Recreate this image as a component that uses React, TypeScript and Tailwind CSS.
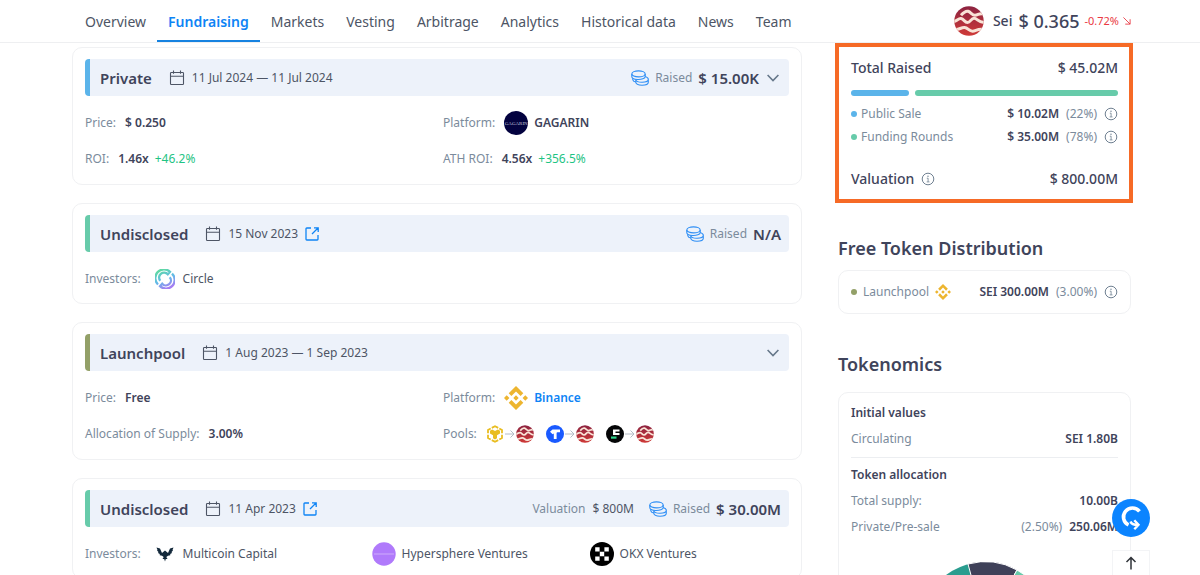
import React from "react";
import { clsx } from "clsx";

const TABS = ["Overview", "Fundraising", "Markets", "Vesting", "Arbitrage", "Analytics", "Historical data", "News", "Team"];

function SeiLogo({ className }: { className: string }) {
  return (
    <svg viewBox="0 0 30 30" className={className} aria-hidden="true">
      <defs>
        <linearGradient id="sei" x1="0" y1="0" x2="0" y2="1">
          <stop offset="0" stopColor="#8c2340" />
          <stop offset="1" stopColor="#cf3b38" />
        </linearGradient>
        <clipPath id="seiClip">
          <circle cx="15" cy="15" r="14.7" />
        </clipPath>
      </defs>
      <circle cx="15" cy="15" r="14.7" fill="url(#sei)" />
      <g clipPath="url(#seiClip)" fill="none" stroke="#f9e3d6" strokeWidth="3">
        <path d="M7 9.300C9.500 6.500 11.500 4.500 14 5.300C17 6.300 18 9.300 21 9.300C24 9.300 25.500 6.500 29 8" />
        <path d="M-1 15.500C2.500 15.500 4 12.300 7 12.600C10 13 10.500 16.500 13.500 16.500C16.500 16.500 17 12.300 20 12.300C23.500 12.300 24 16.800 31 16.500" />
        <path d="M1 23.500C5 24 7 21.300 10.500 21.500C14 21.700 15 25.300 18.500 25.200C22 25.100 23.500 22.300 30 23.500" />
      </g>
    </svg>
  );
}

function CalendarIcon() {
  return (
    <svg viewBox="0 0 16 16" className="size-4 shrink-0" fill="none" stroke="#4d5565" strokeWidth="1.100" aria-hidden="true">
      <rect x="1.500" y="2.500" width="13" height="12" rx="0.8" />
      <path d="M1.500 6.200H14.500M4.500 0.600V3.800M11.500 0.600V3.800" />
    </svg>
  );
}

function CoinsIcon() {
  return (
    <svg viewBox="0 0 18 16" className="h-4 w-[18px] shrink-0" fill="none" stroke="#2f8ff5" strokeWidth="1.1" aria-hidden="true">
      <ellipse cx="7.500" cy="3.900" rx="6.700" ry="3" />
      <path d="M0.800 4V6.500C0.800 8 3 9.300 6.500 9.500C10.500 9.700 14.200 8.500 14.200 6.500V4" />
      <path d="M1.800 8.300V9.800C2.200 11 3.500 11.700 5 12" />
      <path d="M14.200 6.500C16.200 7.200 17.300 8.100 17.300 9.300C17.300 11 14.500 12.300 11 12.300C7.500 12.300 5 11.200 4.800 9.500V12.300C5 14 7.500 15.200 11 15.200C14.500 15.200 17.300 13.900 17.300 12.200V9.300" />
    </svg>
  );
}

function ExternalIcon() {
  return (
    <svg viewBox="0 0 14 14" className="size-[14px]" fill="none" stroke="#0e84f5" strokeWidth="1.300" aria-hidden="true">
      <path d="M6 1H1.800Q1 1 1 1.800V12.200Q1 13 1.800 13H12.200Q13 13 13 12.200V8M9 0.800H13.200V5M13 1L7 7" />
    </svg>
  );
}

function Chevron() {
  return (
    <svg viewBox="0 0 12 8" className="h-2 w-3" fill="none" stroke="#66788a" strokeWidth="1.600" aria-hidden="true">
      <path d="M0.600 1L6 6.500L11.400 1" />
    </svg>
  );
}

function InfoIcon() {
  return (
    <button type="button" aria-label="More information" className="shrink-0">
      <svg viewBox="0 0 14 14" className="size-[14px]" fill="none" stroke="#6f8091" aria-hidden="true">
        <circle cx="7" cy="7" r="5.800" />
        <path d="M5.800 6.200H7.100V9.800M5.700 9.900H8.500" strokeWidth="0.800" />
        <circle cx="7" cy="4.200" r="0.700" fill="#6f8091" stroke="none" />
      </svg>
    </button>
  );
}

function BinanceLogo({ className }: { className: string }) {
  return (
    <svg viewBox="0 0 24 24" className={className} fill="#edb52f" aria-hidden="true">
      <path d="M12 0L19.300 7.300L16.600 10L12 5.400L7.400 10L4.700 7.300ZM2.700 9.300L5.400 12L2.700 14.700L0 12ZM21.300 9.300L24 12L21.300 14.700L18.600 12ZM12 9.300L14.700 12L12 14.700L9.300 12ZM7.400 14L12 18.600L16.600 14L19.300 16.700L12 24L4.700 16.700Z" />
    </svg>
  );
}

function GagarinLogo() {
  return (
    <span className="flex size-6 items-center justify-center rounded-full bg-[#03023f] font-['Liberation_Serif',serif] text-[5px] leading-none text-[#c4c4dc]">
      GAGARIN
    </span>
  );
}

function CircleLogo() {
  return (
    <svg viewBox="0 0 20 20" className="size-5" fill="none" strokeWidth="2.300" aria-hidden="true">
      <defs>
        <linearGradient id="circleA" gradientUnits="userSpaceOnUse" x1="6" y1="1" x2="14" y2="19">
          <stop offset="0" stopColor="#5fd8a4" />
          <stop offset="0.500" stopColor="#62bbe8" />
          <stop offset="1" stopColor="#a77bf3" />
        </linearGradient>
      </defs>
      <g stroke="url(#circleA)">
        <path d="M3 15.500A8.700 8.700 0 0 1 15 2.800L12.800 5.300A4.800 4.800 0 0 0 5.300 11.800" />
        <path d="M17 4.600A8.700 8.700 0 0 1 5 17.200L7.200 14.700A4.800 4.800 0 0 0 14.700 8.200" />
      </g>
    </svg>
  );
}

function MulticoinLogo() {
  return (
    <svg viewBox="0 0 18 16" className="h-4 w-5" fill="#13293b" aria-hidden="true">
      <path d="M0.500 1.500L4 2.500L6 7L7.500 5.800L9 4.500L10.500 5.800L12 7L14 2.500L17.500 1.500L16.500 4L17 4.500L15.500 6L16 7L14.200 8L14.300 9.200L12 9.800L10.300 11L11.500 13L9.800 13L9 15.500L8.200 13L6.500 13L7.700 11L6 9.800L3.700 9.200L3.800 8L2 7L2.500 6L1 4.500L1.500 4Z" />
    </svg>
  );
}

function HypersphereLogo() {
  return (
    <svg viewBox="0 0 24 24" className="size-6" aria-hidden="true">
      <circle cx="12" cy="12" r="11.700" fill="#b07afb" />
      <path d="M2 12H22" stroke="#c9a4fb" strokeWidth="1.200" />
    </svg>
  );
}

function OkxLogo() {
  return (
    <svg viewBox="0 0 24 24" className="size-6" aria-hidden="true">
      <circle cx="12" cy="12" r="12" fill="#000" />
      <path fill="#fff" d="M5.200 5.200h4.400v4.400h-4.400zM14.400 5.200h4.400v4.400h-4.400zM9.800 9.800h4.400v4.400h-4.400zM5.200 14.400h4.400v4.400h-4.400zM14.400 14.400h4.400v4.400h-4.400z" />
    </svg>
  );
}

function BnbLogo() {
  return (
    <svg viewBox="0 0 18 18" className="size-[18px]" fill="none" stroke="#e9bd20" aria-hidden="true">
      <path strokeWidth="1.800" d="M5.800 2.900L9 1.200L12.200 2.900M13.300 3.500L16 5V8.300M16 9.700V13L13.300 14.500M12.200 15.100L9 16.800L5.800 15.100M4.700 14.500L2 13V9.700M2 8.300V5L4.700 3.500" />
      <path fill="#e9bd20" stroke="none" d="M4 5.700L6.200 4.500L9 6.100L11.800 4.500L14 5.700V8.500L11 10.200V13.300L9 14.400L7 13.300V10.200L4 8.500Z" />
    </svg>
  );
}

function TusdLogo() {
  return (
    <svg viewBox="0 0 18 18" className="size-[18px]" aria-hidden="true">
      <circle cx="9" cy="9" r="9" fill="#1a5aff" />
      <path fill="#fff" d="M6.500 4.500H14V7.300H11.500Q10.600 7.300 10.600 8.200V14H7.800V8.600L6.600 9.200L4 6.800Z" />
    </svg>
  );
}

function FdusdLogo() {
  return (
    <svg viewBox="0 0 18 18" className="size-[18px]" aria-hidden="true">
      <circle cx="9" cy="9" r="9" fill="#050607" />
      <path fill="#fff" d="M7 4.500H13.500V6.500H9.500V8H13.500V10H7Z" />
      <path fill="#2bd48b" d="M5 11.500H10.500V13.700H5Z" />
    </svg>
  );
}

function PoolArrow() {
  return (
    <svg viewBox="0 0 10 8" className="mx-[1px] h-2 w-[10px]" fill="none" stroke="#b4bcc6" aria-hidden="true">
      <path d="M0 4H9M5.500 0.500L9 4L5.500 7.500" />
    </svg>
  );
}

function Pool({ children }: { children: React.ReactNode }) {
  return (
    <span className="flex items-center">
      {children}
      <PoolArrow />
      <SeiLogo className="size-[18px]" />
    </span>
  );
}

function Strong({ children }: { children: React.ReactNode }) {
  return <span className="font-semibold text-[#3f445b]">{children}</span>;
}

type RoundProps = {
  title: string;
  date: string;
  accent: string;
  link?: boolean;
  raised?: string;
  valuation?: string;
  expandable?: boolean;
  children: React.ReactNode;
};

function Round({ title, date, accent, link, raised, valuation, expandable, children }: RoundProps) {
  return (
    <section className="rounded-[10px] border border-[#f0f1f3] px-3 pt-[11px] pb-[7px]">
      <header className={clsx("mb-[9px] flex h-[37px] items-center rounded-sm border-l-[5px] bg-[#edf2fa] pr-2 pl-[10px]", accent)}>
        <h2 className="text-[15px] font-semibold text-[#3f445b]">{title}</h2>
        <div className="ml-[17px] flex items-center gap-[7px] text-[#4d5565]">
          <CalendarIcon />
          <time>{date}</time>
          {link && (
            <a href="#announcement" aria-label="Announcement">
              <ExternalIcon />
            </a>
          )}
        </div>
        <div className="ml-auto flex items-center gap-[6px]">
          {valuation && (
            <span className="mr-[9px] flex gap-[7px] text-[#4d5565]">
              <span className="text-[#7b8b9c]">Valuation</span>
              {valuation}
            </span>
          )}
          {raised && (
            <>
              <CoinsIcon />
              <span className="text-[#7b8b9c]">Raised</span>
              <span className="text-[15px] font-semibold text-[#3f445b]">{raised}</span>
            </>
          )}
          {expandable && (
            <button type="button" aria-label="Toggle details" className="px-[2px]">
              <Chevron />
            </button>
          )}
        </div>
      </header>
      {children}
    </section>
  );
}

function Field({ label, children }: { label: string; children: React.ReactNode }) {
  return (
    <div className="flex h-9 items-center gap-[9px]">
      <dt className="text-[#7b8b9c]">{label}</dt>
      <dd className="flex items-center gap-[6px]">{children}</dd>
    </div>
  );
}

function Stat({ label, dot, children }: { label: React.ReactNode; dot?: string; children: React.ReactNode }) {
  return (
    <div className="flex items-center justify-between">
      <span className="flex items-center text-[#7b8b9c]">
        {dot && <i className={clsx("mr-1 size-[6px] rounded-full", dot)} />}
        {label}
      </span>
      <span className="flex items-center gap-[7px] text-[#7b8b9c]">{children}</span>
    </div>
  );
}

export default function App() {
  return (
    <div className="flex h-screen flex-col overflow-hidden bg-white font-['Noto_Sans',sans-serif] text-xs leading-5 text-[#4d5565]">
      <header className="h-[43px] shrink-0 border-b border-[#eeeff1]">
        <div className="flex h-full items-center justify-between pr-[69px] pl-[74px]">
          <nav className="flex h-full text-sm">
            {TABS.map((tab) => (
              <a
                key={tab}
                href={"#" + tab.toLowerCase().replace(" ", "-")}
                className={clsx(
                  "flex items-center border-b-2 px-[11px] pt-[3px] whitespace-nowrap",
                  tab === "Fundraising" ? "border-[#1682e0] font-semibold text-[#0e84f5]" : "border-transparent",
                )}
              >
                {tab}
              </a>
            ))}
          </nav>
          <div className="flex items-center text-[#3f445b]">
            <SeiLogo className="mr-[9px] size-[30px]" />
            <span className="mr-[6px] text-sm font-medium">Sei</span>
            <span className="mr-[5px] text-lg font-medium">$ 0.365</span>
            <span className="mr-1 text-[11px] text-[#ea3943]">-0.72%</span>
            <svg viewBox="0 0 9 9" className="size-2" fill="none" stroke="#ea3943" aria-hidden="true">
              <path d="M0.500 0.500L8 8M8 2.500V8H2.500" />
            </svg>
          </div>
        </div>
      </header>

      <div className="flex min-h-0 flex-1 gap-9 pr-[69px] pl-[72px]">
        <main className="flex min-w-0 flex-1 flex-col gap-[18px] pt-1 *:shrink-0">
          <Round title="Private" date="11 Jul 2024 — 11 Jul 2024" accent="border-[#5bb4ea]" raised="$ 15.00K" expandable>
            <dl className="grid grid-cols-2 gap-x-3">
              <Field label="Price:"><Strong>$ 0.250</Strong></Field>
              <Field label="Platform:"><GagarinLogo /><Strong>GAGARIN</Strong></Field>
              <Field label="ROI:"><Strong>1.46x</Strong><span className="text-[#1fc484]">+46.2%</span></Field>
              <Field label="ATH ROI:"><Strong>4.56x</Strong><span className="text-[#1fc484]">+356.5%</span></Field>
            </dl>
          </Round>

          <Round title="Undisclosed" date="15 Nov 2023" accent="border-[#67cbaa]" link raised="N/A">
            <div className="flex h-[35px] items-center">
              <span className="mr-[14px] text-[#7b8b9c]">Investors:</span>
              <CircleLogo />
              <span className="ml-2">Circle</span>
            </div>
          </Round>

          <Round title="Launchpool" date="1 Aug 2023 — 1 Sep 2023" accent="border-[#93a068]" expandable>
            <dl className="grid grid-cols-2 gap-x-3">
              <Field label="Price:"><Strong>Free</Strong></Field>
              <Field label="Platform:">
                <BinanceLogo className="size-6" />
                <a href="#binance" className="font-semibold text-[#0e84f5]">Binance</a>
              </Field>
              <Field label="Allocation of Supply:"><Strong>3.00%</Strong></Field>
              <Field label="Pools:">
                <span className="flex gap-3">
                  <Pool><BnbLogo /></Pool>
                  <Pool><TusdLogo /></Pool>
                  <Pool><FdusdLogo /></Pool>
                </span>
              </Field>
            </dl>
          </Round>

          <Round title="Undisclosed" date="11 Apr 2023" accent="border-[#67cbaa]" link raised="$ 30.00M" valuation="$ 800M">
            <div className="flex h-[35px] items-center">
              <span className="mr-[14px] text-[#7b8b9c]">Investors:</span>
              <ul className="grid flex-1 grid-cols-[217px_218px_1fr]">
                <li className="flex items-center gap-2"><MulticoinLogo />Multicoin Capital</li>
                <li className="flex items-center gap-[6px]"><HypersphereLogo />Hypersphere Ventures</li>
                <li className="flex items-center gap-[6px]"><OkxLogo />OKX Ventures</li>
              </ul>
            </div>
          </Round>
        </main>

        <aside className="w-[293px] shrink-0">
          <section className="-mr-[2px] -ml-[3px] border-4 border-[#f66a26] pt-[11px] pr-[11px] pb-[10px] pl-3">
            <div className="flex justify-between text-sm font-medium text-[#3f445b]">
              <h2>Total Raised</h2>
              <span>$ 45.02M</span>
            </div>
            <div className="mt-3 mb-2 flex gap-[6px]">
              <span className="h-[6px] w-[58px] rounded-full bg-[#5bb4ea]" />
              <span className="h-[6px] flex-1 rounded-full bg-[#67cbaa]" />
            </div>
            <div className="flex flex-col gap-[3px]">
              <Stat label="Public Sale" dot="bg-[#5bb4ea]"><Strong>$ 10.02M</Strong>(22%)<InfoIcon /></Stat>
              <Stat label="Funding Rounds" dot="bg-[#67cbaa]"><Strong>$ 35.00M</Strong>(78%)<InfoIcon /></Stat>
            </div>
            <div className="mt-[22px] flex items-center justify-between text-sm font-medium text-[#3f445b]">
              <h2 className="flex items-center gap-[7px]">Valuation<InfoIcon /></h2>
              <span>$ 800.00M</span>
            </div>
          </section>

          <h2 className="mt-[31px] text-lg leading-7 font-semibold text-[#3f445b]">Free Token Distribution</h2>
          <section className="mt-2 rounded-[10px] border border-[#f0f1f3] px-3 py-[11px]">
            <Stat dot="bg-[#93a068]" label={<span className="flex items-center gap-[6px] pl-[2px]">Launchpool<BinanceLogo className="size-4" /></span>}>
              <Strong>SEI 300.00M</Strong>(3.00%)<InfoIcon />
            </Stat>
          </section>

          <h2 className="mt-9 text-lg leading-7 font-semibold text-[#3f445b]">Tokenomics</h2>
          <section className="mt-[14px] rounded-[10px] border border-[#f0f1f3] px-3 pt-[10px]">
            <h3 className="font-semibold text-[#3f445b]">Initial values</h3>
            <div className="mt-[6px] border-b border-[#eceef1] pb-2">
              <Stat label="Circulating"><Strong>SEI 1.80B</Strong></Stat>
            </div>
            <h3 className="mt-[7px] font-semibold text-[#3f445b]">Token allocation</h3>
            <div className="mt-[6px] flex flex-col gap-[6px]">
              <Stat label="Total supply:"><Strong>10.00B</Strong></Stat>
              <Stat label="Private/Pre-sale">(2.50%)<Strong>250.06M</Strong></Stat>
            </div>
            <svg viewBox="0 0 130 130" className="mx-auto mt-[25px] size-[130px]" role="img" aria-label="Token allocation chart">
              <circle cx="65" cy="65" r="65" fill="#2a9d8f" />
              <path d="M65 65L48 2A65 65 0 0 1 97 8Z" fill="#3f4159" stroke="#fff" />
              <path d="M65 65L97 8A65 65 0 0 1 130 65Z" fill="#67cbaa" stroke="#fff" />
              <circle cx="65" cy="65" r="38" fill="#fff" />
            </svg>
          </section>
        </aside>
      </div>

      <div className="fixed right-[50px] bottom-0 flex flex-col items-center gap-[13px]">
        <button type="button" aria-label="Open assistant" className="flex size-[38px] items-center justify-center rounded-full bg-[#0b84ff]">
          <svg viewBox="0 0 38 38" className="size-[38px]" fill="none" stroke="#fff" aria-hidden="true">
            <path strokeWidth="3.600" d="M27.500 12.300A9 9 0 1 0 16.500 26" />
            <path strokeWidth="2.400" d="M18.500 22.500C19.500 25.300 22 26 26 26M22.300 21.300L26.500 25.800L22.300 30.300" />
          </svg>
        </button>
        <button type="button" aria-label="Back to top" className="flex h-[25px] w-[38px] items-center justify-center border border-b-0 border-[#f3f4f6] bg-white">
          <svg viewBox="0 0 12 14" className="h-[14px] w-3" fill="none" stroke="#2f3338" strokeWidth="1.500" aria-hidden="true">
            <path d="M6 13.500V1.500M1.500 6L6 1.500L10.500 6" />
          </svg>
        </button>
      </div>
    </div>
  );
}
